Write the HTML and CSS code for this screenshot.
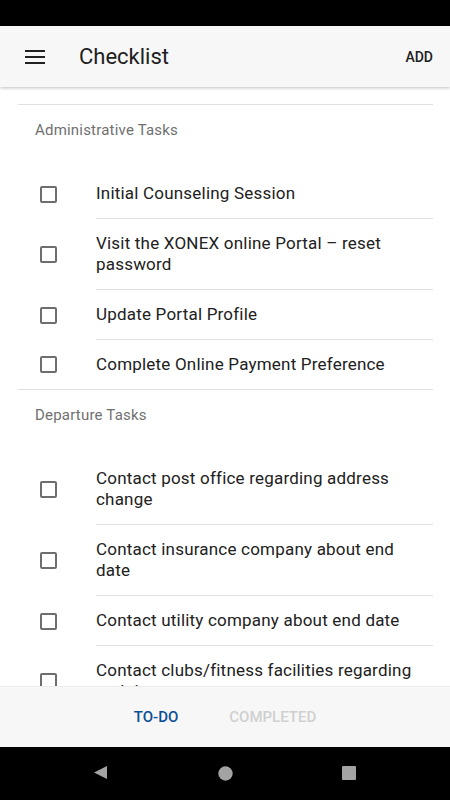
FILE: index.html
```html
<!DOCTYPE html>
<html>
<head>
<meta charset="utf-8">
<link rel="stylesheet" href="styles.css">
</head>
<body>
<div class="screen">
  <div class="status"></div>
  <header class="appbar">
    <svg class="menu" width="20" height="14" viewBox="0 0 20 14"><rect x="0" y="0" width="20" height="2" fill="#212121"/><rect x="0" y="6" width="20" height="2" fill="#212121"/><rect x="0" y="12" width="20" height="2" fill="#212121"/></svg>
    <h1 class="title">Checklist</h1>
    <span class="add">ADD</span>
  </header>
  <main class="content">
    <section class="section">
      <div class="section-head">Administrative Tasks</div>
      <div class="item"><span class="box"></span><div class="text">Initial Counseling Session</div></div>
      <div class="item"><span class="box"></span><div class="text">Visit the XONEX online Portal – reset password</div></div>
      <div class="item"><span class="box"></span><div class="text">Update Portal Profile</div></div>
      <div class="item"><span class="box"></span><div class="text">Complete Online Payment Preference</div></div>
    </section>
    <section class="section">
      <div class="section-head">Departure Tasks</div>
      <div class="item"><span class="box"></span><div class="text">Contact post office regarding address change</div></div>
      <div class="item"><span class="box"></span><div class="text">Contact insurance company about end date</div></div>
      <div class="item"><span class="box"></span><div class="text">Contact utility company about end date</div></div>
      <div class="item"><span class="box"></span><div class="text">Contact clubs/fitness facilities regarding end date</div></div>
    </section>
  </main>
  <nav class="tabs">
    <span class="tab active">TO-DO</span>
    <span class="tab">COMPLETED</span>
  </nav>
  <div class="navbar">
    <svg width="14" height="14" viewBox="0 0 14 14"><polygon points="13,0 13,13 0,6.5" fill="#a3a3a3"/></svg>
    <svg width="15" height="15" viewBox="0 0 15 15"><circle cx="7.5" cy="7.5" r="7.2" fill="#a3a3a3"/></svg>
    <svg width="14" height="14" viewBox="0 0 14 14"><rect x="0" y="0" width="14" height="14" rx="1" fill="#a3a3a3"/></svg>
  </div>
</div>
</body>
</html>
```
FILE: styles.css
```css
* { box-sizing: border-box; }
html, body { margin: 0; padding: 0; }
body {
  font-family: Roboto, "Noto Sans", "Liberation Sans", sans-serif;
  background: #000;
}
.screen {
  width: 450px;
  height: 800px;
  display: flex;
  flex-direction: column;
  overflow: hidden;
  background: #fff;
}
.status {
  height: 26px;
  background: #000;
  flex: none;
}
.appbar {
  height: 61px;
  flex: none;
  display: flex;
  align-items: center;
  padding: 0 17px 0 25px;
  background: #f7f7f7;
  box-shadow: 0 1px 3px rgba(0,0,0,0.25);
  position: relative;
  z-index: 2;
}
.menu { display: block; margin-top: 1px; }
.title {
  margin: 0 0 0 34px;
  font-size: 22px;
  font-weight: 400;
  color: #212121;
  flex: 1;
}
.add {
  font-size: 14px;
  font-weight: 500;
  color: #212121;
}
.content {
  flex: 1;
  overflow: hidden;
  padding: 17px 17px 0 18px;
}
.section {
  border-top: 1px solid #e0e0e0;
}
.section-head {
  height: 64px;
  padding: 15px 0 0 17px;
  font-size: 15px;
  letter-spacing: 0.2px;
  line-height: 20px;
  color: #707070;
}
.item {
  display: flex;
  align-items: center;
}
.box {
  flex: none;
  width: 17px;
  height: 17px;
  border: 2px solid #6e6e6e;
  border-radius: 2px;
  margin: 0 39px 0 22px;
}
.text {
  flex: 1;
  padding: 14px 1px 14px 0;
  font-size: 17px;
  letter-spacing: 0.2px;
  line-height: 21px;
  color: #212121;
  border-bottom: 1px solid #e0e0e0;
}
.item:last-child .text { border-bottom: none; }
.tabs {
  height: 61px;
  flex: none;
  display: flex;
  justify-content: center;
  align-items: center;
  gap: 51px;
  background: #f7f7f7;
  border-top: 1px solid #ececec;
  font-size: 15px;
  font-weight: 500;
}
.tab { color: #d0d0d0; }
.tab.active { color: #0c4e95; }
.navbar {
  height: 53px;
  flex: none;
  background: #000;
  display: flex;
  justify-content: space-between;
  align-items: center;
  padding: 0 94px 1px 94px;
}
.navbar svg { display: block; }
```
